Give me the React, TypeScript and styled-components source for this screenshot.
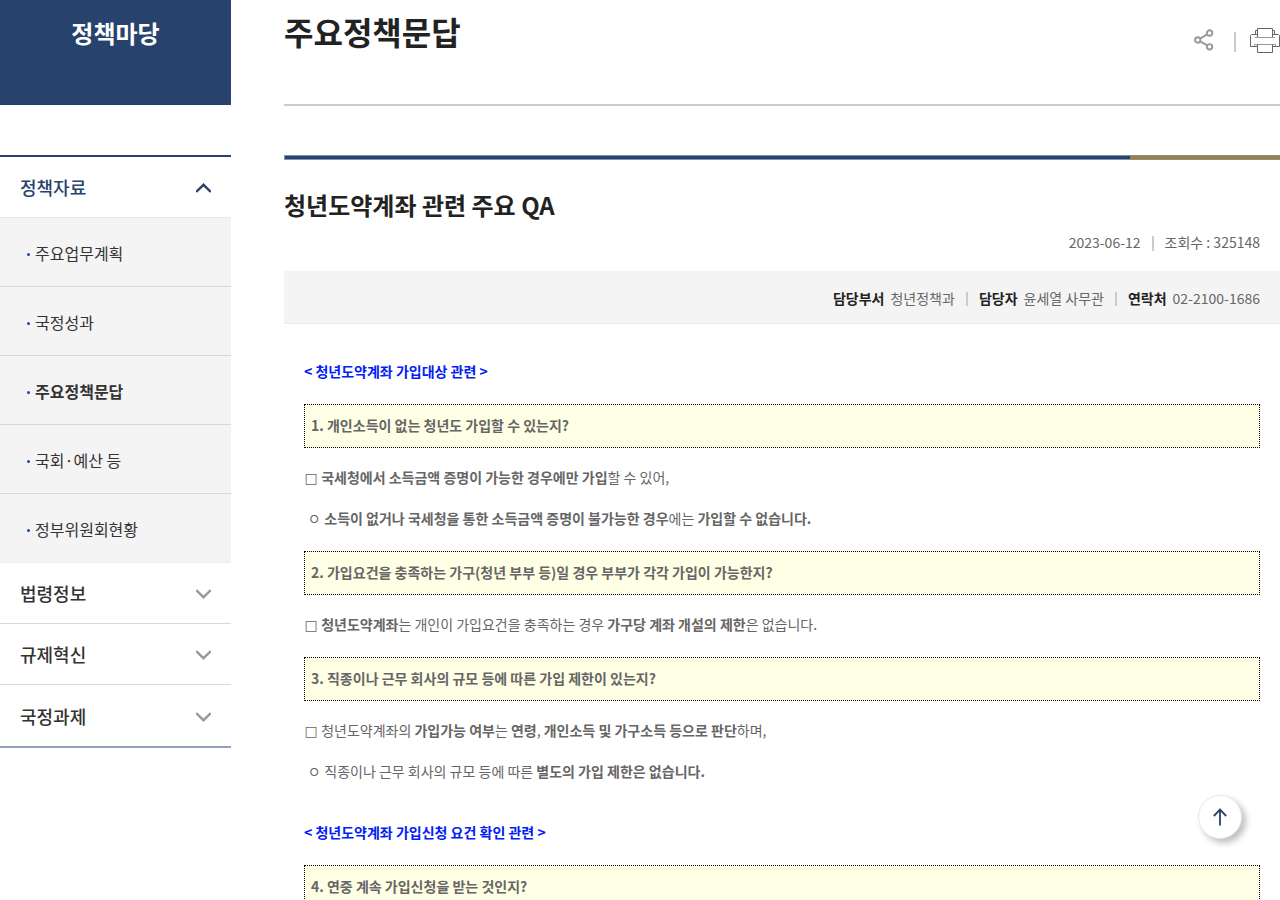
import React from "react";
import styled, { createGlobalStyle } from "styled-components";

const navy = "#27426c";

const GlobalStyle = createGlobalStyle`
  *, *::before, *::after { box-sizing: border-box; }
  body {
    margin: 0;
    background: #fff;
    color: #666;
    font: 14px/24px "Noto Sans CJK KR", "Noto Sans", sans-serif;
  }
  h1, h2, h3, p, ul, dl, dd { margin: 0; padding: 0; }
  ul { list-style: none; }
  a { color: inherit; text-decoration: none; }
  button { font: inherit; color: inherit; background: none; border: 0; padding: 0; cursor: pointer; }
`;

const Page = styled.div`
  display: flex;
  align-items: flex-start;
  gap: 53px;
  height: 100vh;
  overflow: hidden;
`;

const Sidebar = styled.aside`
  flex: 0 0 231px;
`;

const SideTitle = styled.h2`
  height: 105px;
  padding-top: 15px;
  background: ${navy};
  color: #fff;
  font-size: 24px;
  line-height: 36px;
  font-weight: 700;
  text-align: center;
`;

const Menu = styled.ul`
  margin-top: 50px;
  border-top: 2px solid ${navy};
  border-bottom: 2px solid #93a1bf;
`;

const MenuButton = styled.button<{ $open?: boolean }>`
  display: flex;
  align-items: center;
  justify-content: space-between;
  width: 100%;
  height: 61px;
  padding: 0 20px;
  border-bottom: 1px solid ${(p) => (p.$open ? "#e8e8e8" : "#d9d9d9")};
  color: ${(p) => (p.$open ? navy : "#333")};
  font-size: 18px;
  font-weight: 500;

  li:last-child > & { border-bottom: 0; }

  svg { margin-top: 2px; }
`;

const SubItem = styled.li`
  height: 69px;
  background: #f4f4f4;
  border-bottom: 1px solid #d9d9d9;

  &:last-child { border-bottom-color: #ebebeb; }
`;

const SubLink = styled.a<{ $current?: boolean }>`
  display: flex;
  align-items: center;
  gap: 5px;
  height: 100%;
  padding: 2px 20px 0 27px;
  color: #333;
  font-size: 16px;
  font-weight: ${(p) => (p.$current ? 700 : 400)};

  &::before {
    content: "";
    width: 3px;
    height: 3px;
    margin-top: 3px;
    border-radius: 50%;
    background: #1d4a9c;
  }
`;

const Main = styled.main`
  flex: 1;
  min-width: 0;
`;

const PageHeader = styled.header`
  display: flex;
  justify-content: space-between;
  height: 106px;
  border-bottom: 2px solid #ccc;
`;

const PageTitle = styled.h1`
  padding-top: 7px;
  color: #222;
  font-size: 32px;
  line-height: 48px;
  font-weight: 700;
`;

const Tools = styled.div`
  display: flex;
  align-items: center;
  height: 80px;
`;

const ToolButton = styled.button`
  display: flex;
`;

const ToolDivider = styled.span`
  width: 2px;
  height: 20px;
  margin: 4px 14px 0 20px;
  background: #ccc;
`;

const AccentBar = styled.div`
  display: flex;
  height: 5px;
  margin-top: 49px;
`;

const AccentNavy = styled.span`
  flex: 1;
  background: #24426f;
  border: 1px solid #8492ac;
  border-right: 0;
`;

const AccentGold = styled.span`
  flex: 0 0 150px;
  background: #95814c;
  border: solid #938d7c;
  border-width: 1px 0;
`;

const ArticleTitle = styled.h2`
  margin-top: 27px;
  color: #222;
  font-size: 24px;
  line-height: 36px;
  font-weight: 700;
`;

const Meta = styled.div`
  display: flex;
  align-items: center;
  justify-content: flex-end;
  height: 24px;
  margin-top: 7px;
  padding-right: 20px;
`;

const Divider = styled.span<{ $tall?: boolean }>`
  width: 2px;
  height: ${(p) => (p.$tall ? 15 : 14)}px;
  margin: 2px 11px 0;
  background: #ccc;
`;

const Contact = styled.dl`
  display: flex;
  align-items: center;
  justify-content: flex-end;
  height: 53px;
  margin-top: 17px;
  padding: 2px 20px 0 0;
  background: #f4f4f4;
  border-bottom: 1px solid #ebebeb;
`;

const ContactItem = styled.div`
  display: flex;
  gap: 6px;

  dt { color: #222; font-weight: 700; }
`;

const Body = styled.div`
  display: flex;
  flex-direction: column;
  gap: 17px;
  padding: 35px 20px 0;
`;

const Topic = styled.h3`
  color: #0020f5;
  font-size: 14px;
  line-height: 24px;
  font-weight: 700;

  p + & { margin-top: 20px; }
`;

const Question = styled.p`
  height: 44px;
  margin-top: 4px;
  padding: 8px 6px;
  border: 1px dotted #000;
  background: #ffffe5;
  font-weight: 700;
`;

const Answer = styled.p`
  white-space: pre-wrap;
`;

const Mark = styled.span`
  display: inline-block;
  width: 14px;
  text-align: center;
`;

const SquareMark = styled(Mark)`
  font-family: "DejaVu Sans", sans-serif;
  line-height: 20px;
`;

const TopButton = styled.button`
  position: fixed;
  right: 38px;
  bottom: 61px;
  display: flex;
  align-items: center;
  justify-content: center;
  width: 44px;
  height: 44px;
  border: 1px solid #e6e6e6;
  border-radius: 50%;
  background: #fff;
  box-shadow: 4px 4px 6px rgba(0, 0, 0, 0.25);
`;

const Chevron = ({ up }: { up?: boolean }) => (
  <svg width="15" height="10" viewBox="0 0 15 10" fill="none" stroke={up ? navy : "#999"} strokeWidth="2.4" aria-hidden="true">
    <path d={up ? "M.2 9 7.5 1.8 14.8 9" : "M.2 1 7.5 8.2 14.8 1"} />
  </svg>
);

const ShareIcon = () => (
  <svg width="20" height="22" viewBox="0 0 20 22" fill="none" stroke="#999" strokeWidth="1.9" aria-hidden="true">
    <circle cx="3.7" cy="11" r="2.7" />
    <circle cx="15.6" cy="4" r="2.7" />
    <circle cx="15.6" cy="17.8" r="2.7" />
    <path d="M6 9.6 13.2 5.4M6 12.3 13.2 16.4" />
  </svg>
);

const PrintIcon = () => (
  <svg width="30" height="25" viewBox="0 0 30 25" fill="none" stroke="#666" aria-hidden="true">
    <path d="M7.5 9V.5h15V9M7.5 2.5h-2v4M22.5 2.5h2v4" />
    <path d="M7.5 18.5h-7V7.5l1-1h6M22.5 18.5h7V7.5l-1-1h-6" />
    <path d="M5 9.5h20M4.5 18v-1.5h21V18" stroke="#999" />
    <path d="M7.5 16.5v8h15v-8" />
  </svg>
);

const ArrowUp = () => (
  <svg width="14" height="18" viewBox="0 0 14 18" fill="none" stroke={navy} strokeWidth="1.8" aria-hidden="true">
    <path d="M7 17.5V1.5M.8 8 7 1.6 13.2 8" />
  </svg>
);

const subMenu = ["주요업무계획", "국정성과", "주요정책문답", "국회·예산 등", "정부위원회현황"];
const menu = ["법령정보", "규제혁신", "국정과제"];

export default function App() {
  return (
    <>
      <GlobalStyle />
      <Page>
        <Sidebar>
          <SideTitle>정책마당</SideTitle>
          <nav>
            <Menu>
              <li>
                <MenuButton $open aria-expanded="true">정책자료<Chevron up /></MenuButton>
                <ul>
                  {subMenu.map((name) => (
                    <SubItem key={name}>
                      <SubLink href="#" $current={name === "주요정책문답"}>{name}</SubLink>
                    </SubItem>
                  ))}
                </ul>
              </li>
              {menu.map((name) => (
                <li key={name}>
                  <MenuButton aria-expanded="false">{name}<Chevron /></MenuButton>
                </li>
              ))}
            </Menu>
          </nav>
        </Sidebar>
        <Main>
          <PageHeader>
            <PageTitle>주요정책문답</PageTitle>
            <Tools>
              <ToolButton aria-label="공유"><ShareIcon /></ToolButton>
              <ToolDivider />
              <ToolButton aria-label="인쇄"><PrintIcon /></ToolButton>
            </Tools>
          </PageHeader>
          <article>
            <AccentBar><AccentNavy /><AccentGold /></AccentBar>
            <ArticleTitle>청년도약계좌 관련 주요 QA</ArticleTitle>
            <Meta>
              <span>2023-06-12</span>
              <Divider $tall />
              <span>조회수 : 325148</span>
            </Meta>
            <Contact>
              <ContactItem><dt>담당부서</dt><dd>청년정책과</dd></ContactItem>
              <Divider />
              <ContactItem><dt>담당자</dt><dd>윤세열 사무관</dd></ContactItem>
              <Divider />
              <ContactItem><dt>연락처</dt><dd>02-2100-1686</dd></ContactItem>
            </Contact>
            <Body>
              <Topic>&lt; 청년도약계좌 가입대상 관련 &gt;</Topic>
              <Question>1. 개인소득이 없는 청년도 가입할 수 있는지?</Question>
              <Answer><SquareMark>□</SquareMark> <b>국세청에서 소득금액 증명이 가능한 경우에만 가입</b>할 수 있어,</Answer>
              <Answer> <Mark>ㅇ</Mark> <b>소득이 없거나 국세청을 통한 소득금액 증명이 불가능한 경우</b>에는 <b>가입할 수 없습니다.</b></Answer>
              <Question>2. 가입요건을 충족하는 가구(청년 부부 등)일 경우 부부가 각각 가입이 가능한지?</Question>
              <Answer><SquareMark>□</SquareMark> <b>청년도약계좌</b>는 개인이 가입요건을 충족하는 경우 <b>가구당 계좌 개설의 제한</b>은 없습니다.</Answer>
              <Question>3. 직종이나 근무 회사의 규모 등에 따른 가입 제한이 있는지?</Question>
              <Answer><SquareMark>□</SquareMark> 청년도약계좌의 <b>가입가능 여부</b>는 <b>연령</b>, <b>개인소득 및 가구소득 등으로 판단</b>하며,</Answer>
              <Answer> <Mark>ㅇ</Mark> 직종이나 근무 회사의 규모 등에 따른 <b>별도의 가입 제한은 없습니다.</b></Answer>
              <Topic>&lt; 청년도약계좌 가입신청 요건 확인 관련 &gt;</Topic>
              <Question>4. 연중 계속 가입신청을 받는 것인지?</Question>
            </Body>
          </article>
        </Main>
      </Page>
      <TopButton aria-label="맨 위로"><ArrowUp /></TopButton>
    </>
  );
}
